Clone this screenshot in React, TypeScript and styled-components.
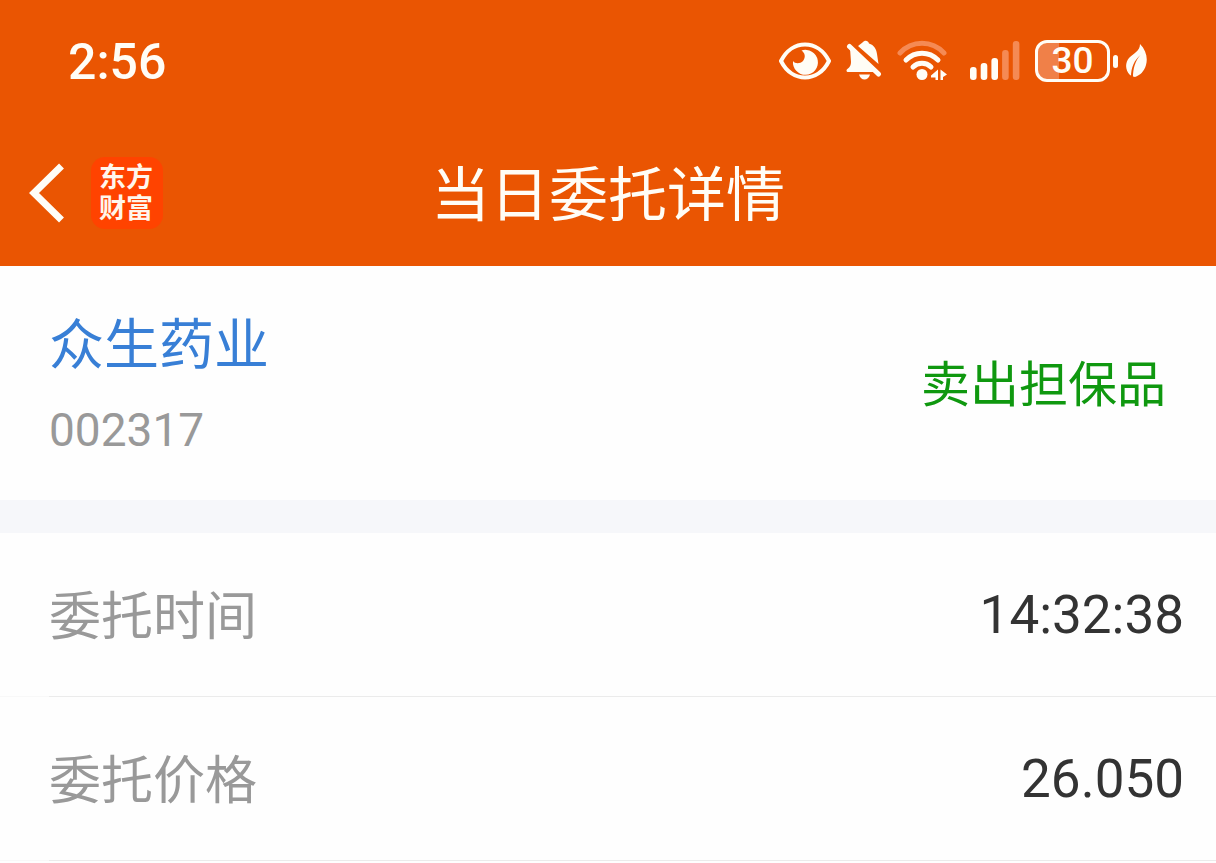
import React from "react";
import styled, { createGlobalStyle } from "styled-components";

const numeric = `Roboto, "Noto Sans CJK SC", sans-serif`;

const GlobalStyle = createGlobalStyle`
  * { box-sizing: border-box; }
  body {
    margin: 0;
    background: #fefefe;
    font-family: "Noto Sans CJK SC", sans-serif;
    color: #333;
  }
`;

const Header = styled.header`
  background: #ea5502;
  color: #fffdf6;
`;

const StatusBar = styled.div`
  display: flex;
  align-items: center;
  justify-content: space-between;
  height: 124px;
  padding: 0 68px;
`;

const Clock = styled.time`
  font-family: ${numeric};
  font-size: 50px;
  line-height: 60px;
  font-weight: 500;
`;

const StatusIcons = styled.div`
  display: flex;
  align-items: center;
  gap: 15px;
  padding-bottom: 2px;
`;

const Icon = styled.svg`
  display: block;
  flex: none;
`;

const SignalIcon = styled(Icon)`
  margin-left: 8px;
`;

const PowerGroup = styled.div`
  display: flex;
  align-items: center;
  gap: 8px;
`;

const Battery = styled.div`
  display: flex;
  align-items: center;
  gap: 3px;
`;

const BatteryBody = styled.div<{ $level: number }>`
  display: flex;
  align-items: center;
  justify-content: center;
  width: 75px;
  height: 42px;
  border: 3px solid #fffdf6;
  border-radius: 12px;
  background: linear-gradient(
    to right,
    #f08048 ${(p) => p.$level}%,
    transparent ${(p) => p.$level}%
  );
  font-family: ${numeric};
  font-size: 37px;
  line-height: 36px;
  font-weight: 500;
`;

const BatteryTip = styled.span`
  width: 5px;
  height: 13px;
  border-radius: 3px;
  background: #fffdf6;
`;

const NavBar = styled.nav`
  display: grid;
  grid-template-columns: 1fr auto 1fr;
  align-items: center;
  height: 142px;
  padding: 0 28px 4px;
`;

const NavLeft = styled.div`
  display: flex;
  align-items: center;
  gap: 27px;
`;

const BackButton = styled.button`
  padding: 0;
  border: 0;
  background: none;
  color: inherit;
  cursor: pointer;
`;

const AppLogo = styled.a`
  width: 72px;
  height: 72px;
  padding: 3px 8px;
  border-radius: 14px;
  background: #ff4300;
  color: #fff6ec;
  font-size: 27px;
  line-height: 31px;
  font-weight: 700;
  text-decoration: none;
`;

const Title = styled.h1`
  margin: 0;
  padding-bottom: 4px;
  font-size: 59px;
  line-height: 72px;
  font-weight: 400;
`;

const StockCard = styled.section`
  display: flex;
  align-items: center;
  justify-content: space-between;
  height: 234px;
  padding: 0 50px 0 49px;
`;

const StockName = styled.h2`
  margin: 0 0 14px;
  font-size: 55px;
  line-height: 80px;
  font-weight: 400;
  color: #387fd6;
`;

const StockCode = styled.p`
  margin: 0;
  font-family: ${numeric};
  font-size: 46px;
  line-height: 72px;
  color: #999;
`;

const Side = styled.strong`
  padding-bottom: 4px;
  font-size: 49px;
  line-height: 72px;
  font-weight: 400;
  color: #0f980f;
`;

const Separator = styled.div`
  height: 33px;
  background: #f6f7fa;
`;

const Details = styled.dl`
  margin: 0;
`;

const Row = styled.div`
  display: flex;
  align-items: center;
  justify-content: space-between;
  height: 164px;
  padding: 0 32px 0 49px;
  background: linear-gradient(to right, #f8f8f8 49px, #ebebeb 49px) bottom / 100% 1px no-repeat;
`;

const Label = styled.dt`
  padding-bottom: 4px;
  font-size: 52px;
  line-height: 76px;
  color: #999;
`;

const Value = styled.dd`
  margin: 0;
  font-family: ${numeric};
  font-size: 53px;
  line-height: 76px;
`;

const EyeIcon = () => (
  <Icon width="52" height="38" viewBox="0 0 52 38" fill="none" aria-label="护眼模式">
    <path d="M2 19C13-3 39-3 50 19C39 41 13 41 2 19Z" stroke="currentColor" strokeWidth="4" strokeLinejoin="round" />
    <path d="M22.500 8.500A12.500 12.500 0 1 1 14 19C16 22 21 22 24 19C27 15 26 11 22.500 8.500Z" fill="currentColor" />
  </Icon>
);

const BellOffIcon = () => (
  <Icon width="36" height="42" viewBox="0 0 36 42" fill="currentColor" aria-label="静音">
    <path d="M12 6L16.500 2.500C18.500 0 22 0 23 3.500C28 5 30.500 9 31 14L32.500 24Z" />
    <path d="M4 8L30 32H2C0 32 0 29.500 2 28.500C4 27 5 25 5 22Z" />
    <path d="M3.500 6.500L32.500 34" stroke="currentColor" strokeWidth="5" strokeLinecap="round" />
    <path d="M13 34.500H24C23 38 21 39.500 18.500 39.500S14 38 13 34.500Z" />
  </Icon>
);

const WifiIcon = () => (
  <Icon width="50" height="42" viewBox="0 0 50 42" fill="none" aria-label="无线网络">
    <g stroke="currentColor" strokeWidth="5" strokeLinecap="round">
      <path d="M3 13C15 0 35 0 47 13" stroke="#f58a54" />
      <path d="M9 20C18 11 32 11 41 20" />
      <path d="M16 27C21 22 29 22 34 27" />
    </g>
    <circle cx="25" cy="34.500" r="5.500" fill="currentColor" />
    <path d="M41 29.500V40H38.500V37.500H34V35.500ZM43.500 29.500L50 34.500L46 37V40H43.500Z" fill="currentColor" />
  </Icon>
);

const LeafIcon = () => (
  <Icon width="22" height="34" viewBox="0 0 22 34" aria-label="省电模式">
    <path d="M14 0C20 6 22 14 20 21C18 28 14 31 9 33C8 33 6 32 4 31C-1 26-1 19 3 14C8 9 14 7 14 0Z" fill="currentColor" />
    <path d="M14.500 11C8.500 16 5 23 5 33H7C7 25 9 17 14.500 11Z" fill="#ea5502" />
  </Icon>
);

const signalBars = [
  { height: 13, active: true },
  { height: 17, active: true },
  { height: 22, active: true },
  { height: 30, active: false },
  { height: 39, active: false },
];

const orderDetails = [
  { label: "委托时间", value: "14:32:38" },
  { label: "委托价格", value: "26.050" },
];

export default function App() {
  return (
    <>
      <GlobalStyle />
      <Header>
        <StatusBar>
          <Clock>2:56</Clock>
          <StatusIcons>
            <EyeIcon />
            <BellOffIcon />
            <WifiIcon />
            <SignalIcon width="50" height="40" viewBox="0 0 50 40" aria-label="信号">
              {signalBars.map((bar, i) => (
                <rect
                  key={bar.height}
                  x={i * 10.7}
                  y={39 - bar.height}
                  width="6.600"
                  height={bar.height}
                  rx="3"
                  fill={bar.active ? "currentColor" : "#f58a54"}
                />
              ))}
            </SignalIcon>
            <PowerGroup>
              <Battery>
                <BatteryBody $level={30}>30</BatteryBody>
                <BatteryTip />
              </Battery>
              <LeafIcon />
            </PowerGroup>
          </StatusIcons>
        </StatusBar>
        <NavBar>
          <NavLeft>
            <BackButton type="button" aria-label="返回">
              <Icon width="36" height="60" viewBox="0 0 36 60" fill="none">
                <path d="M33.500 3L6 30L33.500 57" stroke="currentColor" strokeWidth="7" />
              </Icon>
            </BackButton>
            <AppLogo href="#">东方财富</AppLogo>
          </NavLeft>
          <Title>当日委托详情</Title>
        </NavBar>
      </Header>
      <main>
        <StockCard>
          <div>
            <StockName>众生药业</StockName>
            <StockCode>002317</StockCode>
          </div>
          <Side>卖出担保品</Side>
        </StockCard>
        <Separator />
        <Details>
          {orderDetails.map((item) => (
            <Row key={item.label}>
              <Label>{item.label}</Label>
              <Value>{item.value}</Value>
            </Row>
          ))}
        </Details>
      </main>
    </>
  );
}
